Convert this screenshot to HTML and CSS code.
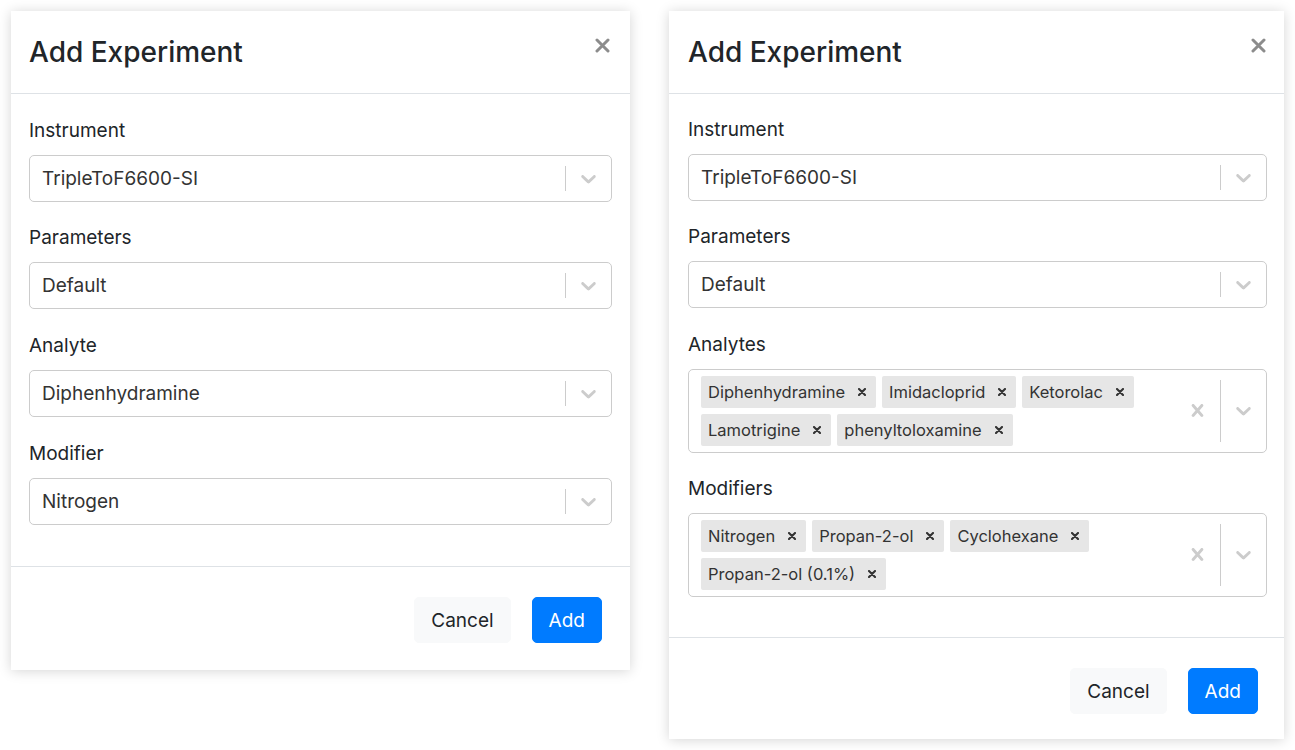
FILE: index.html
```html
<!DOCTYPE html>
<html lang="en">
<head>
<meta charset="utf-8">
<title>Add Experiment</title>
<link rel="stylesheet" href="styles.css">
</head>
<body>
<div class="page">
  <section class="dlg dlg-a">
    <header class="dlg-head">
      <h4 class="dlg-title">Add Experiment</h4>
      <button class="close" aria-label="Close"><svg viewBox="0 0 15 15" width="15" height="15"><path d="M2 2L13 13M13 2L2 13" stroke="#8c8c8c" stroke-width="3" stroke-linecap="round"/></svg></button>
    </header>
    <div class="dlg-body">
      <div class="group">
        <label class="lbl">Instrument</label>
        <div class="select">
          <div class="value-box"><span class="value">TripleToF6600-SI</span></div>
          <div class="indicators"><span class="sep"></span><span class="ind"><svg viewBox="0 0 20 20" width="25" height="25"><path d="M4.516 7.548c0.436-0.446 1.043-0.481 1.576 0l3.908 3.747 3.908-3.747c0.533-0.481 1.141-0.446 1.574 0 0.436 0.445 0.408 1.197 0 1.615-0.406 0.418-4.695 4.502-4.695 4.502-0.217 0.223-0.502 0.335-0.787 0.335s-0.57-0.112-0.789-0.335c0 0-4.287-4.084-4.695-4.502s-0.436-1.17 0-1.615z"/></svg></span></div>
        </div>
      </div>
      <div class="group">
        <label class="lbl">Parameters</label>
        <div class="select">
          <div class="value-box"><span class="value">Default</span></div>
          <div class="indicators"><span class="sep"></span><span class="ind"><svg viewBox="0 0 20 20" width="25" height="25"><path d="M4.516 7.548c0.436-0.446 1.043-0.481 1.576 0l3.908 3.747 3.908-3.747c0.533-0.481 1.141-0.446 1.574 0 0.436 0.445 0.408 1.197 0 1.615-0.406 0.418-4.695 4.502-4.695 4.502-0.217 0.223-0.502 0.335-0.787 0.335s-0.57-0.112-0.789-0.335c0 0-4.287-4.084-4.695-4.502s-0.436-1.17 0-1.615z"/></svg></span></div>
        </div>
      </div>
      <div class="group">
        <label class="lbl">Analyte</label>
        <div class="select">
          <div class="value-box"><span class="value">Diphenhydramine</span></div>
          <div class="indicators"><span class="sep"></span><span class="ind"><svg viewBox="0 0 20 20" width="25" height="25"><path d="M4.516 7.548c0.436-0.446 1.043-0.481 1.576 0l3.908 3.747 3.908-3.747c0.533-0.481 1.141-0.446 1.574 0 0.436 0.445 0.408 1.197 0 1.615-0.406 0.418-4.695 4.502-4.695 4.502-0.217 0.223-0.502 0.335-0.787 0.335s-0.57-0.112-0.789-0.335c0 0-4.287-4.084-4.695-4.502s-0.436-1.17 0-1.615z"/></svg></span></div>
        </div>
      </div>
      <div class="group">
        <label class="lbl">Modifier</label>
        <div class="select">
          <div class="value-box"><span class="value">Nitrogen</span></div>
          <div class="indicators"><span class="sep"></span><span class="ind"><svg viewBox="0 0 20 20" width="25" height="25"><path d="M4.516 7.548c0.436-0.446 1.043-0.481 1.576 0l3.908 3.747 3.908-3.747c0.533-0.481 1.141-0.446 1.574 0 0.436 0.445 0.408 1.197 0 1.615-0.406 0.418-4.695 4.502-4.695 4.502-0.217 0.223-0.502 0.335-0.787 0.335s-0.57-0.112-0.789-0.335c0 0-4.287-4.084-4.695-4.502s-0.436-1.17 0-1.615z"/></svg></span></div>
        </div>
      </div>
    </div>
    <footer class="dlg-foot">
      <button class="btn btn-light">Cancel</button>
      <button class="btn btn-primary">Add</button>
    </footer>
  </section>

  <section class="dlg dlg-b">
    <header class="dlg-head">
      <h4 class="dlg-title">Add Experiment</h4>
      <button class="close" aria-label="Close"><svg viewBox="0 0 15 15" width="15" height="15"><path d="M2 2L13 13M13 2L2 13" stroke="#8c8c8c" stroke-width="3" stroke-linecap="round"/></svg></button>
    </header>
    <div class="dlg-body">
      <div class="group">
        <label class="lbl">Instrument</label>
        <div class="select">
          <div class="value-box"><span class="value">TripleToF6600-SI</span></div>
          <div class="indicators"><span class="sep"></span><span class="ind"><svg viewBox="0 0 20 20" width="25" height="25"><path d="M4.516 7.548c0.436-0.446 1.043-0.481 1.576 0l3.908 3.747 3.908-3.747c0.533-0.481 1.141-0.446 1.574 0 0.436 0.445 0.408 1.197 0 1.615-0.406 0.418-4.695 4.502-4.695 4.502-0.217 0.223-0.502 0.335-0.787 0.335s-0.57-0.112-0.789-0.335c0 0-4.287-4.084-4.695-4.502s-0.436-1.17 0-1.615z"/></svg></span></div>
        </div>
      </div>
      <div class="group">
        <label class="lbl">Parameters</label>
        <div class="select">
          <div class="value-box"><span class="value">Default</span></div>
          <div class="indicators"><span class="sep"></span><span class="ind"><svg viewBox="0 0 20 20" width="25" height="25"><path d="M4.516 7.548c0.436-0.446 1.043-0.481 1.576 0l3.908 3.747 3.908-3.747c0.533-0.481 1.141-0.446 1.574 0 0.436 0.445 0.408 1.197 0 1.615-0.406 0.418-4.695 4.502-4.695 4.502-0.217 0.223-0.502 0.335-0.787 0.335s-0.57-0.112-0.789-0.335c0 0-4.287-4.084-4.695-4.502s-0.436-1.17 0-1.615z"/></svg></span></div>
        </div>
      </div>
      <div class="group">
        <label class="lbl">Analytes</label>
        <div class="select multi">
          <div class="value-box">
            <span class="chip">Diphenhydramine<svg class="chip-x" viewBox="0 0 8 8"><path d="M1 1L7 7M7 1L1 7"/></svg></span>
            <span class="chip">Imidacloprid<svg class="chip-x" viewBox="0 0 8 8"><path d="M1 1L7 7M7 1L1 7"/></svg></span>
            <span class="chip">Ketorolac<svg class="chip-x" viewBox="0 0 8 8"><path d="M1 1L7 7M7 1L1 7"/></svg></span>
            <span class="chip">Lamotrigine<svg class="chip-x" viewBox="0 0 8 8"><path d="M1 1L7 7M7 1L1 7"/></svg></span>
            <span class="chip">phenyltoloxamine<svg class="chip-x" viewBox="0 0 8 8"><path d="M1 1L7 7M7 1L1 7"/></svg></span>
          </div>
          <div class="indicators">
            <span class="ind"><svg viewBox="0 0 20 20" width="25" height="25"><path d="M14.348 14.849c-0.469 0.469-1.229 0.469-1.697 0l-2.651-3.030-2.651 3.029c-0.469 0.469-1.229 0.469-1.697 0-0.469-0.469-0.469-1.229 0-1.697l2.758-3.15-2.759-3.152c-0.469-0.469-0.469-1.228 0-1.697s1.228-0.469 1.697 0l2.652 3.031 2.651-3.031c0.469-0.469 1.228-0.469 1.697 0s0.469 1.229 0 1.697l-2.758 3.152 2.758 3.15c0.469 0.469 0.469 1.229 0 1.698z"/></svg></span>
            <span class="sep"></span>
            <span class="ind"><svg viewBox="0 0 20 20" width="25" height="25"><path d="M4.516 7.548c0.436-0.446 1.043-0.481 1.576 0l3.908 3.747 3.908-3.747c0.533-0.481 1.141-0.446 1.574 0 0.436 0.445 0.408 1.197 0 1.615-0.406 0.418-4.695 4.502-4.695 4.502-0.217 0.223-0.502 0.335-0.787 0.335s-0.57-0.112-0.789-0.335c0 0-4.287-4.084-4.695-4.502s-0.436-1.17 0-1.615z"/></svg></span>
          </div>
        </div>
      </div>
      <div class="group">
        <label class="lbl">Modifiers</label>
        <div class="select multi">
          <div class="value-box">
            <span class="chip">Nitrogen<svg class="chip-x" viewBox="0 0 8 8"><path d="M1 1L7 7M7 1L1 7"/></svg></span>
            <span class="chip">Propan-2-ol<svg class="chip-x" viewBox="0 0 8 8"><path d="M1 1L7 7M7 1L1 7"/></svg></span>
            <span class="chip">Cyclohexane<svg class="chip-x" viewBox="0 0 8 8"><path d="M1 1L7 7M7 1L1 7"/></svg></span>
            <span class="chip">Propan-2-ol (0.1%)<svg class="chip-x" viewBox="0 0 8 8"><path d="M1 1L7 7M7 1L1 7"/></svg></span>
          </div>
          <div class="indicators">
            <span class="ind"><svg viewBox="0 0 20 20" width="25" height="25"><path d="M14.348 14.849c-0.469 0.469-1.229 0.469-1.697 0l-2.651-3.030-2.651 3.029c-0.469 0.469-1.229 0.469-1.697 0-0.469-0.469-0.469-1.229 0-1.697l2.758-3.15-2.759-3.152c-0.469-0.469-0.469-1.228 0-1.697s1.228-0.469 1.697 0l2.652 3.031 2.651-3.031c0.469-0.469 1.228-0.469 1.697 0s0.469 1.229 0 1.697l-2.758 3.152 2.758 3.15c0.469 0.469 0.469 1.229 0 1.698z"/></svg></span>
            <span class="sep"></span>
            <span class="ind"><svg viewBox="0 0 20 20" width="25" height="25"><path d="M4.516 7.548c0.436-0.446 1.043-0.481 1.576 0l3.908 3.747 3.908-3.747c0.533-0.481 1.141-0.446 1.574 0 0.436 0.445 0.408 1.197 0 1.615-0.406 0.418-4.695 4.502-4.695 4.502-0.217 0.223-0.502 0.335-0.787 0.335s-0.57-0.112-0.789-0.335c0 0-4.287-4.084-4.695-4.502s-0.436-1.17 0-1.615z"/></svg></span>
          </div>
        </div>
      </div>
    </div>
    <footer class="dlg-foot">
      <button class="btn btn-light">Cancel</button>
      <button class="btn btn-primary">Add</button>
    </footer>
  </section>
</div>
</body>
</html>
```

FILE: styles.css
```css
* { box-sizing: border-box; }
html, body { margin: 0; background: #fff; }
body {
  font-family: Inter, "Liberation Sans", Arial, sans-serif;
  color: #212529;
}
.page {
  display: flex;
  align-items: flex-start;
  gap: 39px;
  padding: 11px;
}
.dlg {
  background: #fff;
  display: flex;
  flex-direction: column;
  box-shadow: 0 1px 12px rgba(0, 0, 0, 0.17);
}
.dlg-a { width: 619px; }
.dlg-b { width: 615px; }

.dlg-head {
  display: flex;
  justify-content: space-between;
  align-items: flex-start;
  padding: 19px 20px 19px 18px;
  border-bottom: 1px solid #dee2e6;
}
.dlg-b .dlg-head { padding-left: 19px; padding-right: 18px; }
.dlg-title {
  margin: 0;
  font-size: 28px;
  font-weight: 500;
  line-height: 44px;
  color: #212529;
}
.close {
  margin: 8px 0 0 0;
  padding: 0;
  border: 0;
  background: none;
  width: 15px;
  height: 15px;
  display: flex;
}

.dlg-body { padding: 20.7px 18px; }
.dlg-b .dlg-body { padding: 20.2px 17px 20.2px 19px; }
.group { margin-bottom: 20.7px; }
.dlg-b .group { margin-bottom: 20.2px; }

.lbl {
  display: block;
  font-size: 19px;
  line-height: 30px;
  margin-bottom: 10px;
  padding-top: 1px;
  color: #212529;
}
.lbl { line-height: 29px; }

.select {
  display: flex;
  min-height: 47px;
  border: 1px solid #ccc;
  border-radius: 5px;
  background: #fff;
}
.value-box {
  flex: 1;
  display: flex;
  align-items: center;
  padding: 0 12px;
  font-size: 19px;
  color: #333;
  min-width: 0;
}
.indicators {
  display: flex;
  align-items: stretch;
}
.sep {
  width: 1px;
  background: #ccc;
  margin: 10px 0;
}
.ind {
  width: 45px;
  display: flex;
  align-items: center;
  justify-content: center;
}
.ind svg { fill: #ccc; display: block; }

.multi .value-box {
  flex-wrap: wrap;
  align-content: center;
  padding: 3px 9px;
}
.chip {
  display: flex;
  align-items: center;
  height: 32px;
  margin: 3px;
  padding: 0 10px 0 7px;
  background: #e6e6e6;
  border-radius: 2px;
  font-size: 16.5px;
  color: #333;
}
.chip-x {
  width: 8px;
  height: 8px;
  margin-left: 13px;
  stroke: #333;
  stroke-width: 2.1;
  stroke-linecap: round;
}

.dlg-foot {
  display: flex;
  justify-content: flex-end;
  gap: 21px;
  padding: 30px 28px 27px;
  border-top: 1px solid #dee2e6;
}
.dlg-b .dlg-foot { padding: 30px 26px 25px; }
.btn {
  height: 46px;
  padding: 0 16px;
  font-family: inherit;
  font-size: 19px;
  border: 1px solid transparent;
  border-radius: 5px;
  cursor: pointer;
}
.btn-light { background: #f8f9fa; border-color: #f8f9fa; color: #212529; }
.btn-primary { background: #007bff; border-color: #007bff; color: #fff; }
```
